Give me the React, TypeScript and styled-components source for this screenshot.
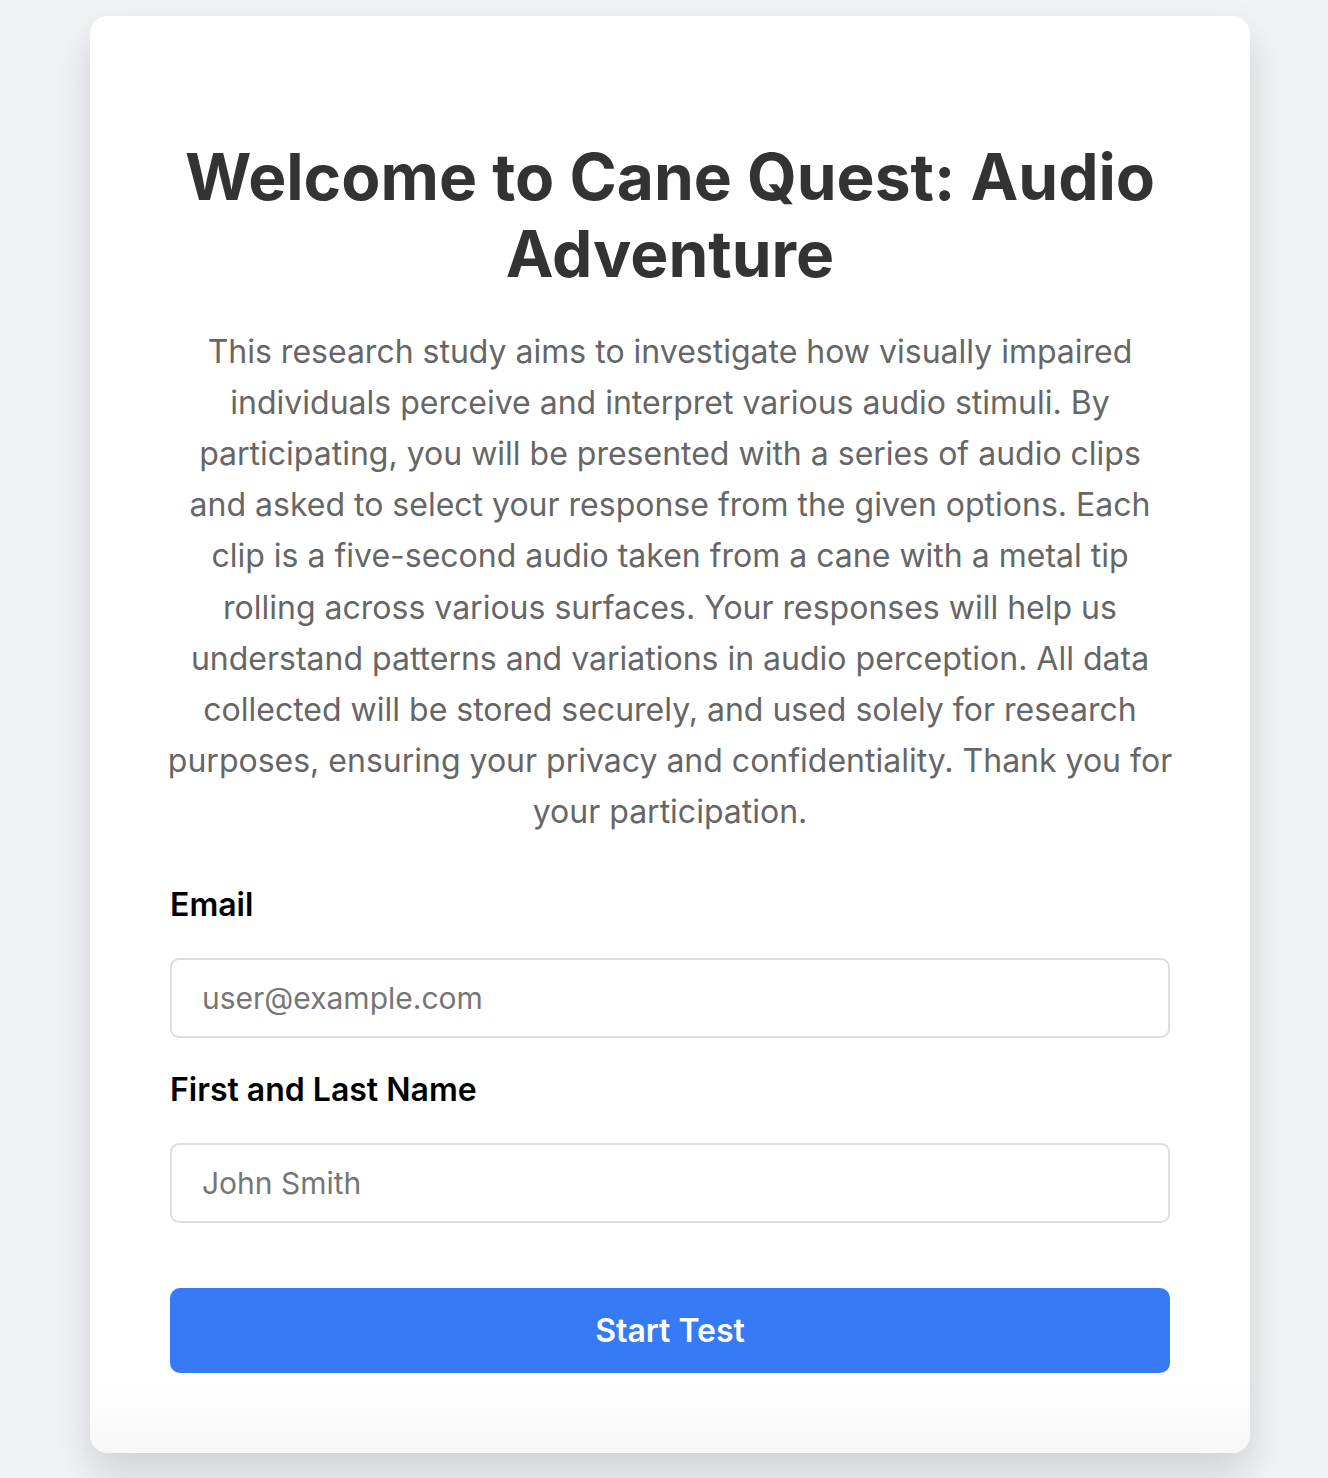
import React from "react";
import styled, { createGlobalStyle } from "styled-components";

const GlobalStyle = createGlobalStyle`
  html, body {
    margin: 0;
    padding: 0;
    background: #f0f2f5;
    font-family: Inter, "Noto Sans", "Liberation Sans", sans-serif;
  }
  * { box-sizing: border-box; }
`;

const Page = styled.div`
  min-height: 100vh;
  padding: 16px 0 24px 12px;
  display: flex;
  justify-content: center;
  align-items: flex-start;
`;

const Card = styled.main`
  width: 1160px;
  padding: 80px;
  background: linear-gradient(to bottom, #ffffff calc(100% - 70px), #f7f7f8 100%);
  border-radius: 18px;
  box-shadow: 0 20px 40px rgba(0, 0, 0, 0.14);
  display: flex;
  flex-direction: column;
`;

const Title = styled.h1`
  margin: 43px 0 33px;
  font-size: 64px;
  line-height: 1.2;
  font-weight: 700;
  color: #333333;
  text-align: center;
`;

const Intro = styled.p`
  margin: 0 -2.5px 48px;
  font-size: 32px;
  line-height: 51.2px;
  font-weight: 400;
  color: #666666;
  text-align: center;
`;

const Form = styled.form`
  display: flex;
  flex-direction: column;
`;

const Field = styled.div`
  display: flex;
  flex-direction: column;
  gap: 34px;
  margin-bottom: 33px;
  &:last-of-type {
    margin-bottom: 65px;
  }
`;

const Label = styled.label`
  font-size: 32px;
  line-height: 38px;
  font-weight: 600;
  color: #000000;
`;

const Input = styled.input`
  width: 100%;
  height: 80px;
  padding: 20px 30px;
  border: 2px solid #dddddd;
  border-radius: 9px;
  font-family: inherit;
  font-size: 30px;
  color: #333333;
  background: #ffffff;
  outline: none;
  &::placeholder {
    color: #767676;
  }
`;

const Button = styled.button`
  width: 100%;
  height: 85px;
  border: none;
  border-radius: 10px;
  background: #367af6;
  color: #ffffff;
  font-family: inherit;
  font-size: 32px;
  font-weight: 600;
  cursor: pointer;
`;

export default function App() {
  return (
    <>
      <GlobalStyle />
      <Page>
        <Card>
          <Title>Welcome to Cane Quest: Audio Adventure</Title>
          <Intro>
            This research study aims to investigate how visually impaired individuals perceive and
            interpret various audio stimuli. By participating, you will be presented with a series of
            audio clips and asked to select your response from the given options. Each clip is a
            five-second audio taken from a cane with a metal tip rolling across various surfaces. Your
            responses will help us understand patterns and variations in audio perception. All data
            collected will be stored securely, and used solely for research purposes, ensuring your
            privacy and confidentiality. Thank you for your participation.
          </Intro>
          <Form onSubmit={(e) => e.preventDefault()}>
            <Field>
              <Label htmlFor="email">Email</Label>
              <Input id="email" type="email" placeholder="user@example.com" />
            </Field>
            <Field>
              <Label htmlFor="name">First and Last Name</Label>
              <Input id="name" type="text" placeholder="John Smith" />
            </Field>
            <Button type="submit">Start Test</Button>
          </Form>
        </Card>
      </Page>
    </>
  );
}
